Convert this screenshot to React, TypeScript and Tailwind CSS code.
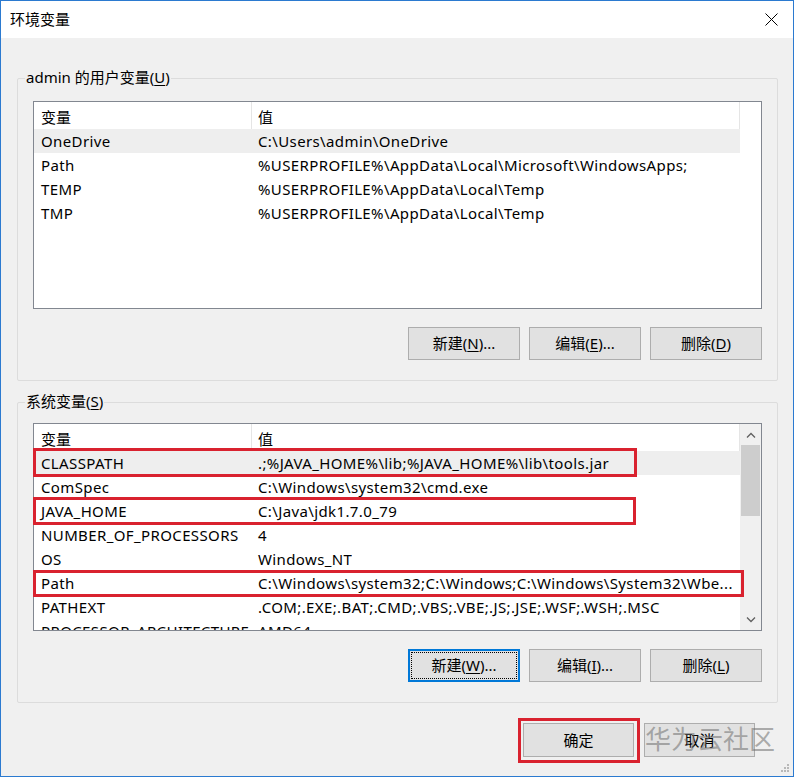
import React from "react";

const FONT = { fontFamily: '"Noto Sans", "Noto Sans CJK SC", sans-serif' };

function Acc({ pre, k, post }: { pre: string; k: string; post: string }) {
  return (
    <span>
      {pre}(<span className="underline underline-offset-2">{k}</span>){post}
    </span>
  );
}

function Btn({ children, focused }: { children: React.ReactNode; focused?: boolean }) {
  if (focused) {
    return (
      <div className="w-[112px] h-[33px] border-2 border-[#0078d7] bg-[#e1e1e1] p-[1px]">
        <div className="w-full h-full border border-dotted border-black flex items-center justify-center text-[15px] text-black">
          {children}
        </div>
      </div>
    );
  }
  return (
    <div className="w-[112px] h-[33px] border border-[#adadad] bg-[#e1e1e1] flex items-center justify-center text-[15px] text-black">
      {children}
    </div>
  );
}

function Group({ title, children, pt }: { title: React.ReactNode; children: React.ReactNode; pt: string }) {
  return (
    <div className={`relative w-[761px] border border-[#dcdcdc] rounded-[2px] pl-[15px] pr-[15px] pb-[20px] ${pt}`}>
      <div className="absolute left-[7px] top-[-12px] px-[1px] bg-[#f0f0f0] text-[15px] leading-[20px] text-black">
        {title}
      </div>
      {children}
    </div>
  );
}

type Row = [string, string];

function Header() {
  return (
    <div className="flex h-[27px] w-[706px] text-[15px] text-black">
      <div className="w-[217px] pl-[7px] pt-[3px] leading-[24px]">变量</div>
      <div className="w-[1px] h-full bg-[#e5e5e5]" />
      <div className="w-[487px] pl-[6px] pt-[3px] leading-[24px]">值</div>
      <div className="w-[1px] h-full bg-[#e5e5e5]" />
    </div>
  );
}

function Rows({ rows, selected }: { rows: Row[]; selected: number }) {
  return (
    <div className="flex flex-col w-[706px]">
      {rows.map((r, i) => (
        <div
          key={i}
          className={`flex h-[24px] items-center text-[15px] tracking-[0.38px] text-black whitespace-nowrap ${i === selected ? "bg-[#eeeeee]" : ""}`}
        >
          <div className="w-[218px] shrink-0 pl-[7px] overflow-hidden">{r[0]}</div>
          <div className="pl-[6px] overflow-hidden">{r[1]}</div>
        </div>
      ))}
    </div>
  );
}

const userRows: Row[] = [
  ["OneDrive", "C:\\Users\\admin\\OneDrive"],
  ["Path", "%USERPROFILE%\\AppData\\Local\\Microsoft\\WindowsApps;"],
  ["TEMP", "%USERPROFILE%\\AppData\\Local\\Temp"],
  ["TMP", "%USERPROFILE%\\AppData\\Local\\Temp"],
];

const sysRows: Row[] = [
  ["CLASSPATH", ".;%JAVA_HOME%\\lib;%JAVA_HOME%\\lib\\tools.jar"],
  ["ComSpec", "C:\\Windows\\system32\\cmd.exe"],
  ["JAVA_HOME", "C:\\Java\\jdk1.7.0_79"],
  ["NUMBER_OF_PROCESSORS", "4"],
  ["OS", "Windows_NT"],
  ["Path", "C:\\Windows\\system32;C:\\Windows;C:\\Windows\\System32\\Wbe..."],
  ["PATHEXT", ".COM;.EXE;.BAT;.CMD;.VBS;.VBE;.JS;.JSE;.WSF;.WSH;.MSC"],
  ["PROCESSOR_ARCHITECTURE", "AMD64"],
];

export default function App() {
  return (
    <div
      className="relative w-[794px] h-[777px] border border-[#2b7ad0] bg-[#f0f0f0] flex flex-col overflow-hidden"
      style={FONT}
    >
      {/* title bar */}
      <div className="h-[37px] bg-white flex items-center justify-between pl-[9px] pr-[14px] shrink-0">
        <span className="text-[15px] text-black">环境变量</span>
        <svg width="13" height="13" viewBox="0 0 13 13" className="mr-[1px]">
          <path d="M0.5 0.5 L12.5 12.5 M12.5 0.5 L0.5 12.5" stroke="#000" strokeWidth="1" fill="none" />
        </svg>
      </div>

      <div className="pl-[16px] pt-[40px] flex flex-col">
        {/* user vars */}
        <Group title={<span>admin 的用户变量(<span className="underline underline-offset-2">U</span>)</span>} pt="pt-[22px]">
          <div className="w-[729px] h-[208px] border border-[#828790] bg-white overflow-hidden">
            <Header />
            <Rows rows={userRows} selected={0} />
          </div>
          <div className="flex justify-end gap-[9px] mt-[18px]">
            <Btn><Acc pre="新建" k="N" post="..." /></Btn>
            <Btn><Acc pre="编辑" k="E" post="..." /></Btn>
            <Btn><Acc pre="删除" k="D" post="" /></Btn>
          </div>
        </Group>

        {/* system vars */}
        <div className="mt-[21px]">
          <Group title={<span>系统变量(<span className="underline underline-offset-2">S</span>)</span>} pt="pt-[20px]">
            <div className="relative w-[729px] h-[208px]">
              <div className="w-full h-full border border-[#828790] bg-white overflow-hidden flex">
                <div className="flex flex-col">
                  <Header />
                  <Rows rows={sysRows} selected={0} />
                </div>
                <div className="w-[21px] h-full bg-[#f0f0f0] flex flex-col items-center">
                  <div className="h-[21px] w-full flex items-center justify-center">
                    <svg width="10" height="6" viewBox="0 0 10 6">
                      <path d="M1 5.5 L5 1.5 L9 5.5" stroke="#606060" strokeWidth="1.3" fill="none" />
                    </svg>
                  </div>
                  <div className="w-[19px] h-[71px] bg-[#cdcdcd]" />
                  <div className="flex-1" />
                  <div className="h-[21px] w-full flex items-center justify-center">
                    <svg width="10" height="6" viewBox="0 0 10 6">
                      <path d="M1 0.5 L5 4.5 L9 0.5" stroke="#606060" strokeWidth="1.3" fill="none" />
                    </svg>
                  </div>
                </div>
              </div>
              <div className="absolute left-0 top-[25px] w-[604px] h-[29px] border-[3px] border-[#d9222f]" />
              <div className="absolute left-0 top-[74px] w-[603px] h-[28px] border-[3px] border-[#d9222f]" />
              <div className="absolute left-0 top-[147px] w-[711px] h-[27px] border-[3px] border-[#d9222f]" />
            </div>
            <div className="flex justify-end gap-[9px] mt-[18px]">
              <Btn focused><Acc pre="新建" k="W" post="..." /></Btn>
              <Btn><Acc pre="编辑" k="I" post="..." /></Btn>
              <Btn><Acc pre="删除" k="L" post="" /></Btn>
            </div>
          </Group>
        </div>

        {/* dialog buttons */}
        <div className="w-[761px] flex justify-end gap-[10px] pr-[23px] mt-[20px]">
          <div className="relative">
            <div className="w-[111px] h-[34px] border border-[#adadad] bg-[#e1e1e1] flex items-center justify-center text-[15px] text-black">
              确定
            </div>
            <div className="absolute left-[-5px] top-[-5px] w-[122px] h-[45px] border-[3px] border-[#d9222f]" />
          </div>
          <div className="w-[111px] h-[34px] border border-[#adadad] bg-[#e1e1e1] flex items-center justify-center text-[15px] text-black">
            取消
          </div>
        </div>
      </div>

      {/* watermark */}
      <div className="absolute left-[644px] top-[722px] text-[26px] leading-[32px] text-[rgba(110,110,110,0.55)] whitespace-nowrap pointer-events-none">
        华为云社区
      </div>

      {/* resize grip */}
      <svg className="absolute right-[3px] bottom-[3px]" width="10" height="10" viewBox="0 0 10 10">
        <rect x="7" y="1" width="2" height="2" fill="#b8b8b8" />
        <rect x="4" y="4" width="2" height="2" fill="#b8b8b8" />
        <rect x="7" y="4" width="2" height="2" fill="#b8b8b8" />
        <rect x="1" y="7" width="2" height="2" fill="#b8b8b8" />
        <rect x="4" y="7" width="2" height="2" fill="#b8b8b8" />
        <rect x="7" y="7" width="2" height="2" fill="#b8b8b8" />
      </svg>
    </div>
  );
}
